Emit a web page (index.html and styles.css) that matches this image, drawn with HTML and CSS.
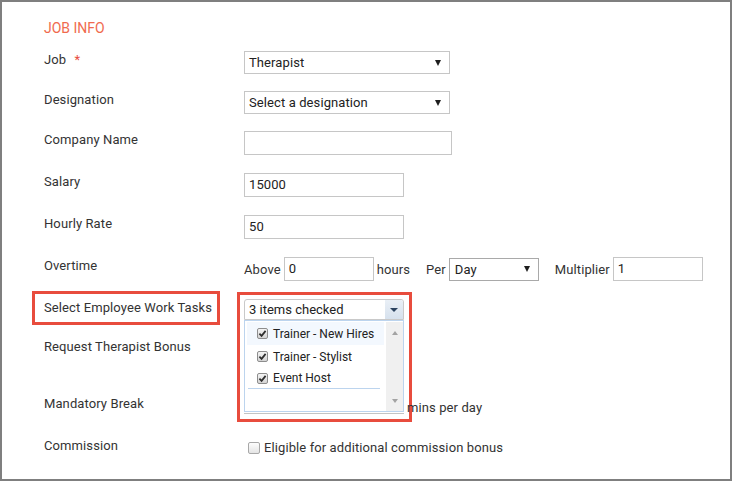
FILE: index.html
```html
<!DOCTYPE html>
<html>
<head>
<meta charset="utf-8">
<link rel="stylesheet" href="styles.css">
</head>
<body>
<div class="page">
  <h2 class="title">JOB INFO</h2>

  <div class="row h40">
    <div class="label">Job <span class="req">*</span></div>
    <div class="ctrl"><div class="select w206"><span>Therapist</span><span class="caret"></span></div></div>
  </div>

  <div class="row h40">
    <div class="label">Designation</div>
    <div class="ctrl"><div class="select w206"><span>Select a designation</span><span class="caret"></span></div></div>
  </div>

  <div class="row h42">
    <div class="label">Company Name</div>
    <div class="ctrl"><div class="input w208"></div></div>
  </div>

  <div class="row h42">
    <div class="label">Salary</div>
    <div class="ctrl"><div class="input w160">15000</div></div>
  </div>

  <div class="row h42">
    <div class="label">Hourly Rate</div>
    <div class="ctrl"><div class="input w160">50</div></div>
  </div>

  <div class="row h42">
    <div class="label">Overtime</div>
    <div class="ctrl ot">
      <span class="ot-text">Above</span>
      <div class="input w90 ot-in">0</div>
      <span class="ot-text hours">hours</span>
      <span class="ot-text per">Per</span>
      <div class="select day w90"><span>Day</span><span class="caret"></span></div>
      <span class="ot-text mult">Multiplier</span>
      <div class="input w90 ot-in">1</div>
    </div>
  </div>

  <div class="row h39">
    <div class="label">Select Employee Work Tasks<span class="annot annot-label"></span></div>
    <div class="ctrl">
      <div class="ms">
        <span class="ms-text">3 items checked</span>
        <span class="ms-arrow"><span class="ms-caret"></span></span>
        <div class="ms-panel">
          <div class="ms-list">
            <div class="ms-item hl"><span class="cb on"><svg viewBox="0 0 9 9" width="9" height="9"><path d="M1.4 4.6 L3.6 6.9 L7.6 1.9" fill="none" stroke="#2e2e2e" stroke-width="1.7"/></svg></span>Trainer - New Hires</div>
            <div class="ms-item"><span class="cb on"><svg viewBox="0 0 9 9" width="9" height="9"><path d="M1.4 4.6 L3.6 6.9 L7.6 1.9" fill="none" stroke="#2e2e2e" stroke-width="1.7"/></svg></span>Trainer - Stylist</div>
            <div class="ms-item last"><span class="cb on"><svg viewBox="0 0 9 9" width="9" height="9"><path d="M1.4 4.6 L3.6 6.9 L7.6 1.9" fill="none" stroke="#2e2e2e" stroke-width="1.7"/></svg></span>Event Host</div>
          </div>
          <div class="ms-scroll"><span class="sc-up"></span><span class="sc-down"></span></div>
        </div>
      </div>
      <span class="annot annot-ms"></span>
    </div>
  </div>

  <div class="row h57">
    <div class="label">Request Therapist Bonus</div>
    <div class="ctrl"></div>
  </div>

  <div class="row h42">
    <div class="label">Mandatory Break</div>
    <div class="ctrl brk"><span class="brk-space"></span><span>mins per day</span></div>
  </div>

  <div class="row">
    <div class="label">Commission</div>
    <div class="ctrl com"><span class="cb2"></span><span>Eligible for additional commission bonus</span></div>
  </div>
</div>
</body>
</html>
```

FILE: styles.css
```css
body {
  margin: 0;
  font-family: Roboto, "Liberation Sans", sans-serif;
  font-size: 13px;
  letter-spacing: 0.1px;
  color: #333;
  background: #fff;
}

.page {
  width: 732px;
  height: 481px;
  box-sizing: border-box;
  border: 2px solid #7f7f7f;
  padding: 18px 0 0 42px;
  overflow: hidden;
}

.title {
  margin: 0 0 14px;
  font-size: 14px;
  font-weight: 400;
  line-height: 17px;
  letter-spacing: 0;
  color: #f06a4e;
}

.row {
  display: grid;
  grid-template-columns: 200px 1fr;
}
.h39 { height: 39px; }
.h40 { height: 40px; }
.h42 { height: 42px; }
.h57 { height: 57px; }

.label {
  position: relative;
  padding-top: 1px;
  line-height: 16px;
  color: #333;
}
.req {
  color: #e84c3d;
  margin-left: 5px;
}

.ctrl {
  position: relative;
  display: flex;
  align-items: flex-start;
}

.select {
  box-sizing: border-box;
  height: 23px;
  border: 1px solid #c6c6c6;
  padding: 0 8px 0 4px;
  display: flex;
  align-items: center;
  justify-content: space-between;
  color: #222;
  background: #fff;
}
.caret {
  width: 0;
  height: 0;
  border-left: 3.5px solid transparent;
  border-right: 3.5px solid transparent;
  border-top: 6px solid #1e1e1e;
}
.w206 { width: 206px; }
.w208 { width: 208px; }
.w160 { width: 160px; }
.w90 { width: 90px; }

.input {
  box-sizing: border-box;
  height: 24px;
  border: 1px solid #c6c6c6;
  padding: 0 4px;
  line-height: 22px;
  color: #222;
  background: #fff;
}

.ot {
  align-items: center;
  height: 24px;
}
.ot-text { color: #333; }
.ot-in { margin-left: 3px; }
.hours { margin-left: 3px; }
.per { margin-left: 16px; }
.day {
  margin-left: 3px;
  border-color: #a9a9a9;
  padding-left: 5px;
}
.mult { margin-left: 16px; }

/* multiselect */
.ms {
  position: relative;
  box-sizing: border-box;
  width: 160px;
  height: 21px;
  border: 1px solid #c9c9c9;
  border-radius: 3px 3px 0 0;
  display: flex;
  align-items: center;
  justify-content: space-between;
  padding-left: 4px;
  background: #fff;
}
.ms-text { color: #222; letter-spacing: 0; }
.ms-arrow {
  width: 18px;
  height: 19px;
  background: linear-gradient(#e9eff6, #d6e1ed);
  border-radius: 0 2px 0 0;
  display: flex;
  align-items: center;
  justify-content: center;
}
.ms-caret {
  width: 0;
  height: 0;
  border-left: 4px solid transparent;
  border-right: 4px solid transparent;
  border-top: 4px solid #2b4360;
}
.ms-panel {
  position: absolute;
  left: -1px;
  top: 20px;
  box-sizing: border-box;
  width: 160px;
  height: 92px;
  border: 1px solid #bcd4ee;
  background: #fff;
  display: flex;
  padding: 1px 0 0 2px;
}
.ms-panel::after {
  content: "";
  position: absolute;
  left: -1px;
  right: -1px;
  bottom: -3px;
  height: 1px;
  background: #c4c4c4;
}
.ms-list {
  flex: 1;
  padding-right: 2px;
  font-size: 12px;
  letter-spacing: 0;
}
.ms-item {
  height: 23px;
  display: flex;
  align-items: center;
  padding-left: 10px;
  color: #222;
}
.ms-item.hl { background: #f3f8fe; }
.ms-item.last {
  height: 20px;
  border-bottom: 1px solid #bcd4ee;
  margin: 0 4px 0 1px;
  padding-left: 9px;
}
.cb {
  box-sizing: border-box;
  width: 11px;
  height: 11px;
  border: 1px solid #8d8d8d;
  border-radius: 2px;
  background: linear-gradient(#f4f4f4, #d4d4d4);
  margin-right: 5px;
  display: flex;
  align-items: center;
  justify-content: center;
}
.ms-scroll {
  width: 17px;
  background: #f0f0f0;
  display: flex;
  flex-direction: column;
  align-items: center;
  justify-content: space-between;
  padding: 9px 0 8px;
  box-sizing: border-box;
}
.sc-up {
  width: 0;
  height: 0;
  border-left: 3.5px solid transparent;
  border-right: 3.5px solid transparent;
  border-bottom: 4px solid #a3a3a3;
}
.sc-down {
  width: 0;
  height: 0;
  border-left: 3.5px solid transparent;
  border-right: 3.5px solid transparent;
  border-top: 4px solid #a3a3a3;
}

/* red annotation boxes */
.annot {
  position: absolute;
  box-sizing: border-box;
  border: 3px solid #e84c3d;
  pointer-events: none;
}
.annot-label {
  left: -12px;
  top: -8px;
  width: 188px;
  height: 34px;
}
.annot-ms {
  left: -7px;
  top: -7px;
  width: 175px;
  height: 130px;
}

.brk {
  padding-top: 5px;
  line-height: 16px;
}
.brk-space { width: 163px; }

.com {
  padding-top: 3px;
  align-items: center;
  line-height: 16px;
}
.cb2 {
  box-sizing: border-box;
  width: 12px;
  height: 12px;
  border: 1px solid #a8a8a8;
  border-radius: 2px;
  background: linear-gradient(#fdfdfd, #e4e4e4);
  margin: 0 4px 0 4px;
}
```
